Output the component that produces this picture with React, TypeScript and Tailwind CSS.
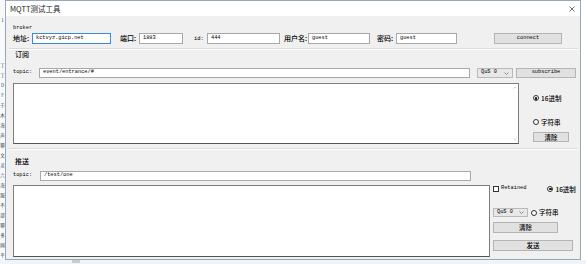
import React from "react";

const cjk = "font-['Noto_Sans_CJK_SC',sans-serif]";
const mono = "font-['Liberation_Mono','Noto_Sans_CJK_SC',monospace]";

const SIDE_CHARS = ["丁", "丁", "D", "F", "于", "木", "海", "声", "聊", "文", "灵", "六", "海", "服", "不", "部", "聊", "多", "网", "平"];

function Label({ children, w }: { children: React.ReactNode; w?: string }) {
  return <span className={`${cjk} text-[7px] leading-[11px] font-medium text-black shrink-0 ${w ?? ""}`}>{children}</span>;
}

function Input({ value, w, focus }: { value: string; w: string; focus?: boolean }) {
  return (
    <div
      className={`${w} h-full shrink-0 bg-white border ${focus ? "border-[#3b8ad9]" : "border-[#a8a8a8]"} flex items-center pl-[3px] ${mono} text-[5.3px] text-black leading-none`}
    >
      {value}
    </div>
  );
}

function Button({ label, w, h = "h-[11px]", latin }: { label: string; w: string; h?: string; latin?: boolean }) {
  return (
    <div
      className={`${w} ${h} shrink-0 bg-[#e1e1e1] border border-[#b4b4b4] flex items-center justify-center ${latin ? `${mono} text-[5.3px]` : `${cjk} text-[6.5px] font-medium`} text-black leading-none`}
    >
      {label}
    </div>
  );
}

function Select({ w, h }: { w: string; h: string }) {
  return (
    <div className={`${w} ${h} shrink-0 bg-[#e8e8e8] border border-[#b9b9b9] flex items-center justify-between px-[3px] ${mono} text-[5.3px] text-black leading-none`}>
      <span>QoS 0</span>
      <svg width="5" height="3" viewBox="0 0 5 3">
        <path d="M0.5 0.5 L2.5 2.5 L4.5 0.5" fill="none" stroke="#666" strokeWidth="0.7" />
      </svg>
    </div>
  );
}

function Radio({ label, checked }: { label: string; checked?: boolean }) {
  return (
    <div className="flex items-center gap-[2px] shrink-0">
      <div className="w-[6px] h-[6px] rounded-full border border-[#333] bg-white flex items-center justify-center">
        {checked && <div className="w-[2.5px] h-[2.5px] rounded-full bg-[#111]" />}
      </div>
      <span className={`${cjk} text-[6.5px] leading-none font-medium text-black`}>{label}</span>
    </div>
  );
}

function TextArea({ w, h, scroll }: { w: string; h: string; scroll?: boolean }) {
  return (
    <div className={`${w} ${h} shrink-0 bg-white border border-[#7e7e7e] border-b-[#555] flex justify-end`}>
      {scroll && (
        <div className="w-[7px] h-full flex flex-col justify-between items-center py-[2px]">
          <svg width="4" height="3" viewBox="0 0 4 3">
            <path d="M0.5 2.5 L2 0.8 L3.5 2.5" fill="none" stroke="#c4c4c4" strokeWidth="0.7" />
          </svg>
          <svg width="4" height="3" viewBox="0 0 4 3">
            <path d="M0.5 0.5 L2 2.2 L3.5 0.5" fill="none" stroke="#c4c4c4" strokeWidth="0.7" />
          </svg>
        </div>
      )}
    </div>
  );
}

export default function App() {
  return (
    <div className="w-[586px] h-[264px] bg-white overflow-hidden flex flex-col">
      <div className="flex h-[260px]">
        {/* background app peeking on the left */}
        <div className="w-[5px] shrink-0 overflow-hidden bg-[#f7f9fb] flex flex-col items-center pt-[15px]">
          <span className={`${cjk} text-[4.5px] leading-[10px] text-[#2d3e50]`}>1</span>
          <div className="h-[37px]" />
          {SIDE_CHARS.map((c, i) => (
            <span key={i} className={`${cjk} text-[4.5px] leading-[10px] text-[#2d3e50]`}>
              {c}
            </span>
          ))}
        </div>

        {/* window */}
        <div className="w-[576px] shrink-0 border border-[#9aa7b4] flex flex-col">
          <div className="h-[15px] bg-white flex items-center justify-between pl-[4px] pr-[5px]">
            <span className={`${cjk} text-[7.5px] leading-none text-[#222]`}>MQTT测试工具</span>
            <svg width="6" height="6" viewBox="0 0 6 6">
              <path d="M0.5 0.5 L5.5 5.5 M5.5 0.5 L0.5 5.5" stroke="#333" strokeWidth="0.7" />
            </svg>
          </div>

          <div className="flex-1 bg-[#f0f0f0] flex flex-col pl-[7px]">
            {/* broker */}
            <div className={`mt-[9px] h-[7px] ${mono} text-[5.3px] leading-[7px] text-black`}>broker</div>
            <div className="mt-[1px] h-[11px] flex items-center">
              <Label w="w-[19px]">地址:</Label>
              <Input value="kctvyz.gicp.net" w="w-[79px]" focus />
              <Label w="w-[19px] ml-[9px]">端口:</Label>
              <Input value="1883" w="w-[44px]" />
              <span className={`ml-[11px] w-[13px] ${mono} text-[5.5px] leading-none text-black`}>id:</span>
              <Input value="444" w="w-[73px]" />
              <Label w="w-[24px] ml-[4px]">用户名:</Label>
              <Input value="guest" w="w-[62px]" />
              <Label w="w-[19px] ml-[7px]">密码:</Label>
              <Input value="guest" w="w-[61px]" />
              <div className="ml-[37px]">
                <Button label="connect" w="w-[68px]" latin />
              </div>
            </div>

            <div className="mt-[4px] -ml-[4px] mr-[2px] h-[1px] bg-[#dadada]" />
            <div className="h-[1px] -ml-[4px] mr-[2px] bg-white" />

            {/* 订阅 */}
            <div className="h-[9px] flex items-center pl-[2px]">
              <Label>订阅</Label>
            </div>
            <div className="mt-[9px] h-[10px] flex items-center">
              <span className={`w-[26px] ${mono} text-[5.3px] leading-none text-black`}>topic:</span>
              <Input value="event/entrance/#" w="w-[431px]" />
              <div className="ml-[7px]">
                <Select w="w-[36px]" h="h-[10px]" />
              </div>
              <div className="ml-[3px]">
                <Button label="subscribe" w="w-[60px]" h="h-[10px]" latin />
              </div>
            </div>
            <div className="mt-[5px] flex">
              <TextArea w="w-[506px]" h="h-[61px]" scroll />
              <div className="ml-[14px] flex flex-col pt-[12px]">
                <Radio label="16进制" checked />
                <div className="h-[17px]" />
                <Radio label="字符串" />
                <div className="mt-[7px]">
                  <Button label="清除" w="w-[36px]" h="h-[10px]" />
                </div>
              </div>
            </div>

            <div className="mt-[4px] -ml-[4px] mr-[2px] h-[1px] bg-[#dadada]" />
            <div className="h-[1px] -ml-[4px] mr-[2px] bg-white" />

            {/* 推送 */}
            <div className="mt-[7px] h-[9px] flex items-center pl-[2px]">
              <Label>推送</Label>
            </div>
            <div className="mt-[5px] h-[10px] flex items-center">
              <span className={`w-[27px] ${mono} text-[5.3px] leading-none text-black`}>topic:</span>
              <Input value="/test/one" w="w-[431px]" />
            </div>
            <div className="mt-[4px] flex">
              <TextArea w="w-[477px]" h="h-[72px]" />
              <div className="ml-[3px] flex flex-col">
                <div className="mt-[1px] h-[6px] flex items-center">
                  <div className="w-[6px] h-[6px] border border-[#333] bg-white" />
                  <span className={`ml-[2px] ${mono} text-[5.3px] leading-none text-black`}>Retained</span>
                  <div className="ml-[21px]">
                    <Radio label="16进制" checked />
                  </div>
                </div>
                <div className="mt-[16px] h-[9px] flex items-center">
                  <Select w="w-[35px]" h="h-[9px]" />
                  <div className="ml-[3px]">
                    <Radio label="字符串" />
                  </div>
                </div>
                <div className="mt-[5px]">
                  <Button label="清除" w="w-[65px]" />
                </div>
                <div className="mt-[7px]">
                  <Button label="发送" w="w-[80px]" />
                </div>
              </div>
            </div>
          </div>
        </div>
        <div className="flex-1 bg-white" />
      </div>
      <div className="flex-1 bg-[#eef4fa] flex">
        <div className="ml-[72px] w-[8px] h-[3px] bg-[#c9cdd2]" />
      </div>
    </div>
  );
}
